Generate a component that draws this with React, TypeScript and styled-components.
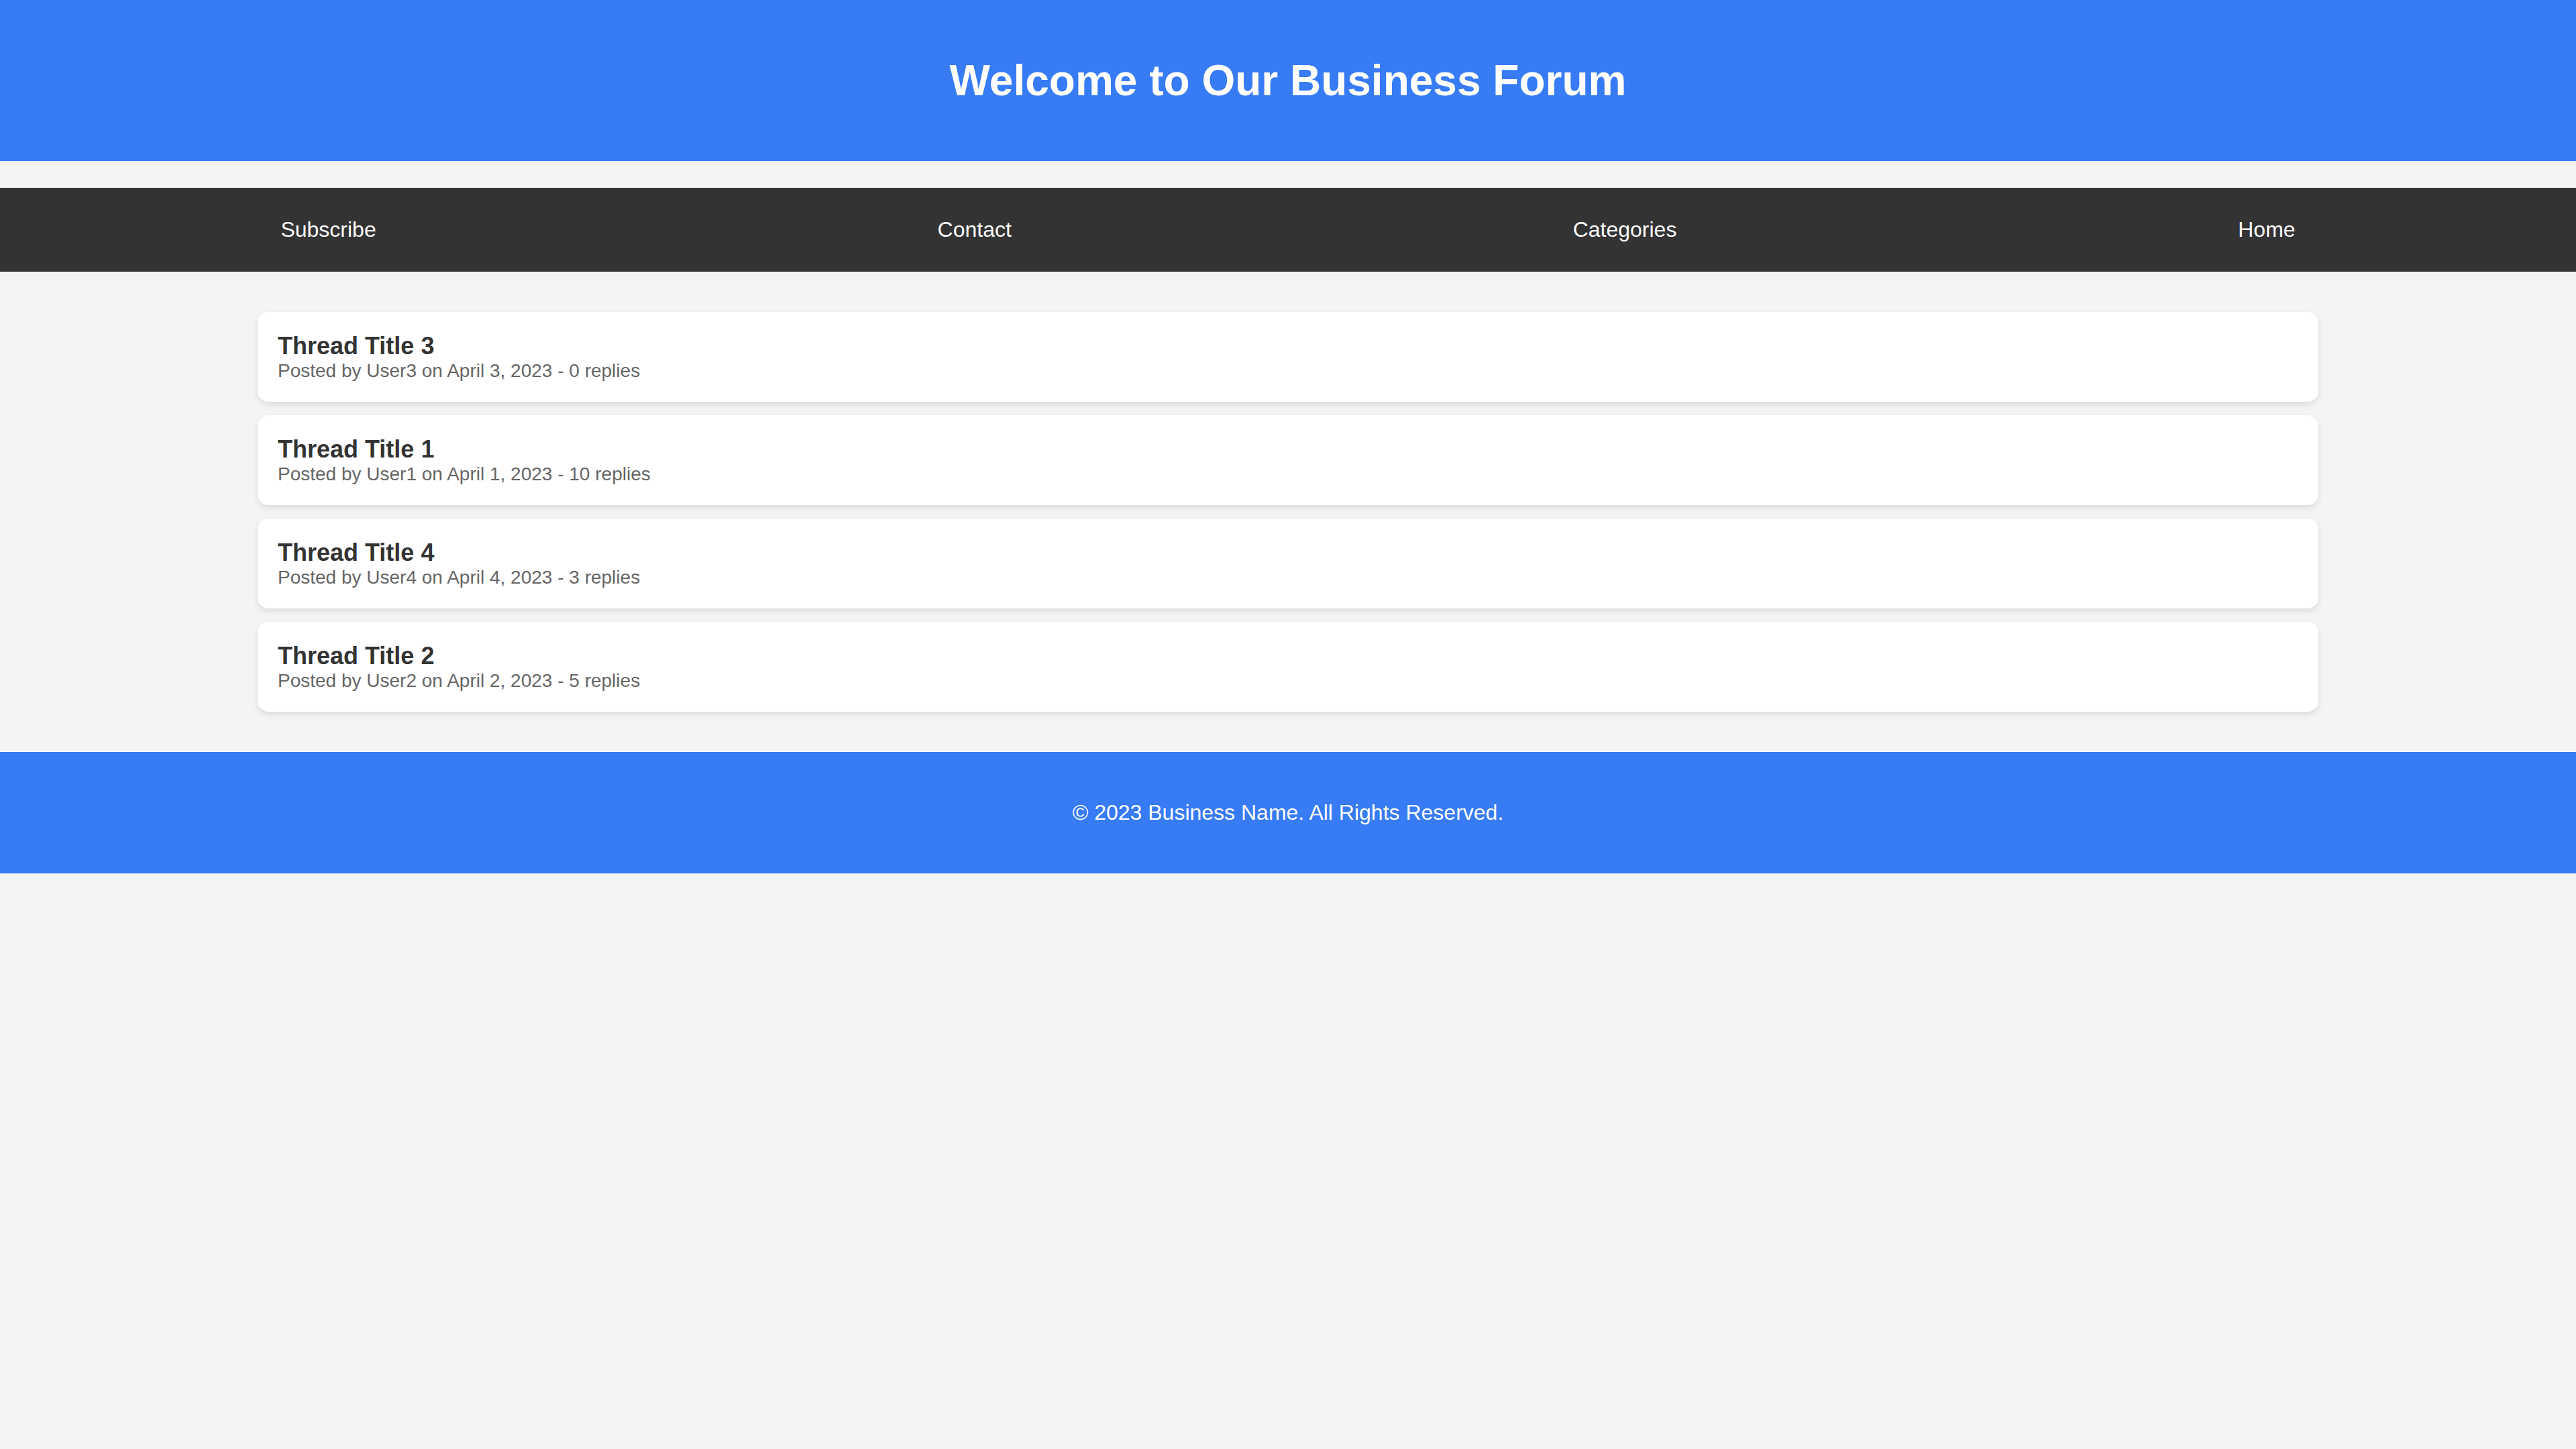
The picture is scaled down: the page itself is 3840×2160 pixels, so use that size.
import styled, { createGlobalStyle } from "styled-components";

const GlobalStyle = createGlobalStyle`
  html, body {
    margin: 0;
    padding: 0;
    background: #f4f4f4;
    font-family: "Liberation Sans", Arial, sans-serif;
  }
`;

type Thread = {
  title: string;
  author: string;
  date: string;
  replies: number;
};

const threads: Thread[] = [
  { title: "Thread Title 3", author: "User3", date: "April 3, 2023", replies: 0 },
  { title: "Thread Title 1", author: "User1", date: "April 1, 2023", replies: 10 },
  { title: "Thread Title 4", author: "User4", date: "April 4, 2023", replies: 3 },
  { title: "Thread Title 2", author: "User2", date: "April 2, 2023", replies: 5 },
];

const navLinks = ["Subscribe", "Contact", "Categories", "Home"];

export default function App() {
  return (
    <>
      <GlobalStyle />
      <Header>
        <Title>Welcome to Our Business Forum</Title>
      </Header>
      <Nav>
        {navLinks.map((label) => (
          <NavLink key={label} href="#">
            {label}
          </NavLink>
        ))}
      </Nav>
      <ThreadList>
        {threads.map((t) => (
          <ThreadCard key={t.title}>
            <ThreadTitle>{t.title}</ThreadTitle>
            <ThreadMeta>
              Posted by {t.author} on {t.date} - {t.replies} replies
            </ThreadMeta>
          </ThreadCard>
        ))}
      </ThreadList>
      <Footer>
        <FooterText>© 2023 Business Name. All Rights Reserved.</FooterText>
      </Footer>
    </>
  );
}

const Header = styled.header`
  background: #377bf5;
  color: #fff;
  padding: 40px;
  text-align: center;
`;

const Title = styled.h1`
  margin: 42.88px 0;
  font-size: 64px;
  font-weight: bold;
`;

const Nav = styled.nav`
  display: flex;
  justify-content: space-around;
  align-items: center;
  margin-top: 40px;
  padding: 44px 0;
  background: #333;
`;

const NavLink = styled.a`
  color: #fff;
  font-size: 32px;
  text-decoration: none;
`;

const ThreadList = styled.main`
  display: flex;
  flex-direction: column;
  gap: 20px;
  width: 80%;
  margin: 0 auto;
  padding: 60px 0;
`;

const ThreadCard = styled.div`
  background: #fff;
  padding: 30px;
  border-radius: 16px;
  box-shadow: 0 4px 10px rgba(0, 0, 0, 0.1);
`;

const ThreadTitle = styled.h3`
  margin: 0;
  font-size: 36px;
  font-weight: bold;
  color: #333;
`;

const ThreadMeta = styled.p`
  margin: 0;
  font-size: 28px;
  color: #666;
`;

const Footer = styled.footer`
  background: #377bf5;
  color: #fff;
  padding: 40px;
  text-align: center;
`;

const FooterText = styled.p`
  margin: 32px 0;
  font-size: 32px;
`;
